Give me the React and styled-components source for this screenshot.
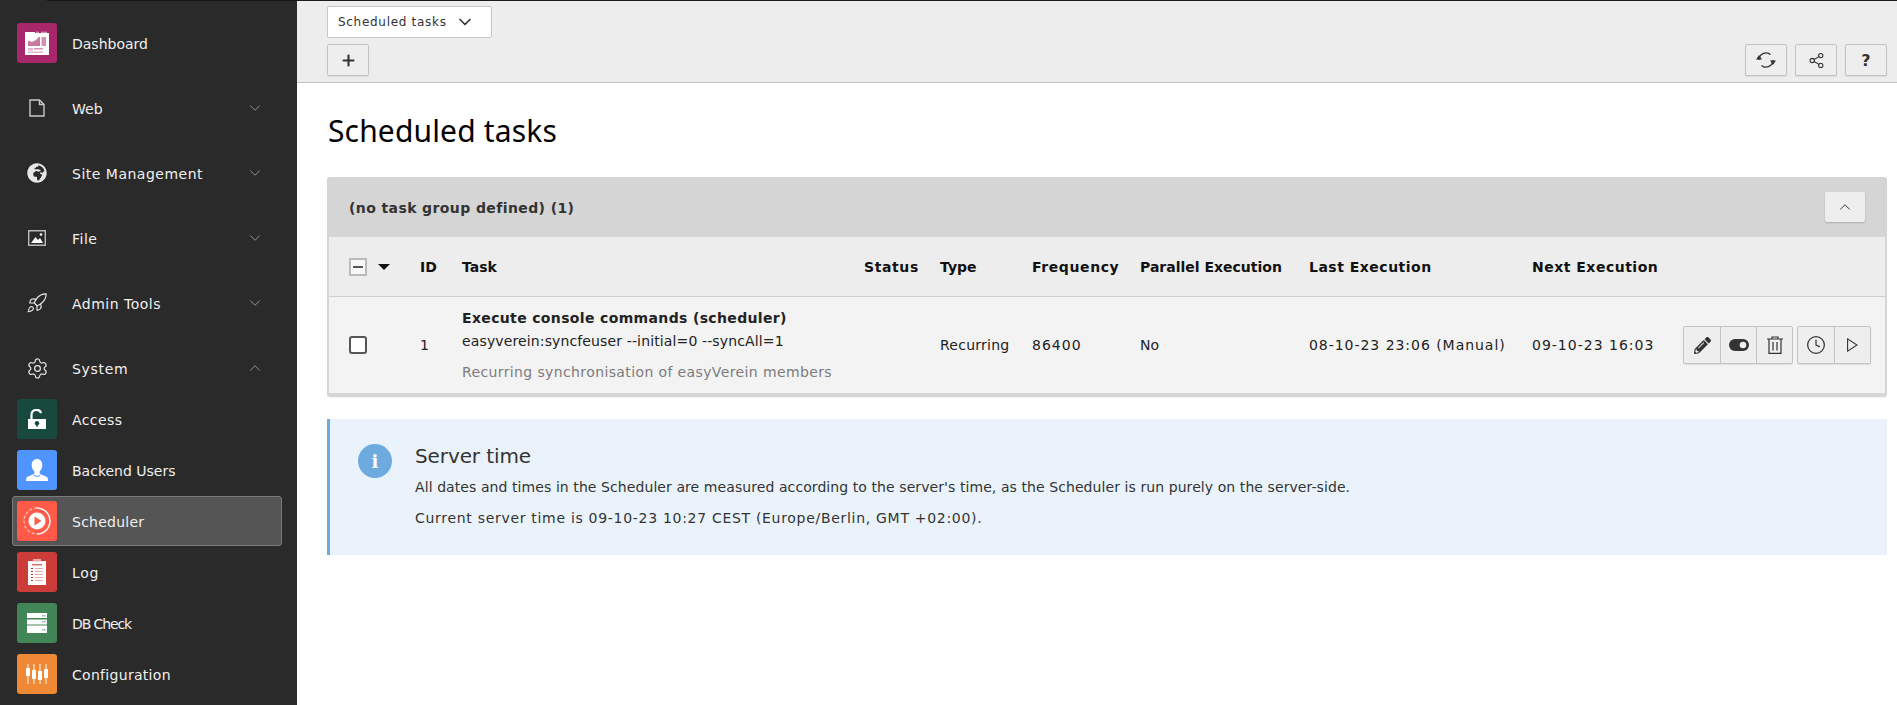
import React from 'react';
import styled, { createGlobalStyle } from 'styled-components';
import { ChevronDown, ChevronUp, Rocket, Settings, Clock, Plus, Share2 } from 'lucide-react';
import { FaGlobeAfrica, FaPencilAlt } from 'react-icons/fa';

const GlobalStyle = createGlobalStyle`
	html, body {
		margin: 0;
		height: 100%;
		overflow: hidden;
		background: #fff;
		font-family: 'DejaVu Sans', Verdana, sans-serif;
		font-size: 14px;
		color: #333;
	}
	* {
		box-sizing: border-box;
	}
`;

const Page = styled.div`
	display: flex;
	height: 705px;
	width: 1897px;
	overflow: hidden;
`;

const Sidebar = styled.nav`
	position: relative;
	flex: 0 0 297px;
	background: #2a2a2a;
	padding-top: 23px;
	color: #f0f0f0;
	&::before {
		content: '';
		position: absolute;
		left: 47px;
		right: 0;
		top: 0;
		height: 1px;
		background: #151515;
	}
`;

const TopItem = styled.div`
	display: flex;
	align-items: center;
	height: 40px;
	margin-bottom: 25px;
	padding-left: 17px;
	&:nth-child(6) {
		margin-bottom: 6px;
	}
`;

const IconSlot = styled.span`
	display: flex;
	align-items: center;
	justify-content: center;
	flex: 0 0 40px;
	height: 40px;
	border-radius: 3px;
	background: ${(p) => p.$bg || 'transparent'};
	color: #e8e8e8;
`;

const Label = styled.span`
	margin-left: 15px;
	padding-top: 2px;
	font-size: 14px;
	letter-spacing: ${(p) => p.$track || 0}px;
	flex: 1;
`;

const Caret = styled.span`
	display: flex;
	margin-right: 33px;
	color: #999;
`;

const SubItem = styled.div`
	display: flex;
	align-items: center;
	height: 50px;
	margin: 0 15px 1px 12px;
	padding-left: 4px;
	border: 1px solid ${(p) => (p.$active ? '#7a7a7a' : 'transparent')};
	border-radius: 3px;
	background: ${(p) => (p.$active ? '#555' : 'transparent')};
`;

const Main = styled.main`
	flex: 1;
	min-width: 0;
`;

const DocHeader = styled.header`
	height: 83px;
	background: #ededed;
	border-top: 1px solid #1c1c1c;
	border-bottom: 1px solid #c3c3c3;
	padding: 5px 10px 0 30px;
`;

const Select = styled.div`
	display: flex;
	align-items: center;
	justify-content: space-between;
	width: 165px;
	height: 32px;
	padding: 0 16px 0 10px;
	background: #fff;
	border: 1px solid #c6c6c6;
	border-radius: 2px;
	font-size: 12px;
	letter-spacing: 0.7px;
	color: #333;
`;

const ButtonBar = styled.div`
	display: flex;
	justify-content: space-between;
	margin-top: 6px;
`;

const ButtonRow = styled.div`
	display: flex;
	gap: 8px;
`;

const IconButton = styled.button`
	display: flex;
	align-items: center;
	justify-content: center;
	width: 42px;
	height: 32px;
	padding: 0;
	background: #eee;
	border: 1px solid #c3c3c3;
	border-radius: 2px;
	box-shadow: 0 1px 1px rgba(0, 0, 0, 0.08);
	color: #333;
	font: bold 16px 'DejaVu Sans', sans-serif;
`;

const Content = styled.div`
	padding: 0 10px 0 30px;
`;

const Title = styled.h1`
	margin: 0;
	padding-top: 28px;
	height: 94px;
	padding-left: 1px;
	font: 400 30px/40px 'Noto Sans', sans-serif;
	letter-spacing: 0.15px;
	color: #000;
`;

const Panel = styled.section`
	border: 2px solid #d6d6d6;
	border-top: 0;
	border-bottom-width: 4px;
	border-radius: 3px;
	box-shadow: 0 1px 1px rgba(0, 0, 0, 0.05);
`;

const PanelHead = styled.div`
	display: flex;
	align-items: center;
	justify-content: space-between;
	height: 60px;
	margin: 0 -2px;
	padding: 0 22px 0 22px;
	background: #d5d5d5;
	border-radius: 3px 3px 0 0;
	font-weight: bold;
	font-size: 14px;
	letter-spacing: 0.4px;
	color: #333;
`;

const PanelTitle = styled.span`
	padding-top: 2px;
`;

const Collapse = styled(IconButton)`
	width: 40px;
	height: 30px;
	border: 0;
	background: #eee;
	box-shadow: 0 1px 2px rgba(0, 0, 0, 0.2);
`;

const columns = '71px 42px 402px 76px 92px 108px 169px 223px 151px 1fr';

const HeadRow = styled.div`
	display: grid;
	grid-template-columns: ${columns};
	align-items: center;
	height: 60px;
	padding-left: 20px;
	background: #ededed;
	border-bottom: 1px solid #d0d0d0;
	font-weight: bold;
	font-size: 14px;
	letter-spacing: 0.25px;
	color: #111;
`;

const BodyRow = styled.div`
	display: grid;
	grid-template-columns: ${columns};
	align-items: center;
	height: 96px;
	padding-left: 20px;
	background: #f3f3f3;
	font-size: 14px;
	color: #222;
`;

const SelectAll = styled.div`
	display: flex;
	align-items: center;
	gap: 11px;
`;

const MinusBox = styled.span`
	display: flex;
	align-items: center;
	justify-content: center;
	width: 18px;
	height: 18px;
	background: #f8f8f8;
	border: 2px solid #bbb;
	&::before {
		content: '';
		width: 10px;
		height: 2px;
		background: #555;
	}
`;

const DownTriangle = styled.span`
	width: 0;
	height: 0;
	border-left: 6px solid transparent;
	border-right: 6px solid transparent;
	border-top: 6px solid #111;
`;

const Check = styled.span`
	display: block;
	width: 18px;
	height: 18px;
	background: #fff;
	border: 2px solid #555;
	border-radius: 3px;
`;

const TaskCell = styled.div`
	display: flex;
	flex-direction: column;
	white-space: nowrap;
`;

const TaskName = styled.strong`
	line-height: 18px;
	letter-spacing: 0.35px;
`;

const TaskCommand = styled.span`
	line-height: 18px;
	margin-top: 5px;
	letter-spacing: 0.13px;
`;

const TaskNote = styled.span`
	line-height: 18px;
	margin-top: 13px;
	letter-spacing: 0.38px;
	color: #7c7c7c;
`;

const Actions = styled.div`
	display: flex;
	gap: 4px;
`;

const ActionGroup = styled.div`
	display: flex;
	height: 38px;
	border: 1px solid #c3c3c3;
	border-radius: 2px;
	background: #eee;
	box-shadow: 0 1px 1px rgba(0, 0, 0, 0.08);
`;

const ActionButton = styled.span`
	display: flex;
	align-items: center;
	justify-content: center;
	width: 36px;
	color: #333;
	& + & {
		border-left: 1px solid #c3c3c3;
	}
`;

const InfoBox = styled.aside`
	display: flex;
	height: 136px;
	margin-top: 22px;
	padding: 25px 0 0 28px;
	background: #eaf3fb;
	border-left: 3px solid #6daae0;
`;

const InfoIcon = styled.span`
	display: flex;
	align-items: center;
	justify-content: center;
	flex: 0 0 34px;
	height: 34px;
	border-radius: 50%;
	background: #6daae0;
	color: #fff;
	font: bold 18px 'DejaVu Serif', serif;
`;

const InfoBody = styled.div`
	margin-left: 23px;
`;

const InfoTitle = styled.h4`
	margin: 0;
	font: 400 20px/24px 'DejaVu Sans', sans-serif;
	letter-spacing: -0.1px;
	color: #333;
`;

const InfoText = styled.p`
	margin: 7px 0 0;
	line-height: 24px;
	font-size: 14px;
	letter-spacing: ${(p) => p.$track || 0}px;
	color: #333;
`;

const Plain = styled.span`
	white-space: nowrap;
	letter-spacing: ${(p) => p.$track || 0}px;
`;

// module icons, drawn because no icon package has them
const DashboardIcon = () => (
	<svg width="24" height="24" viewBox="0 0 24 24">
		<path d="M0 1h10v1h14v22H0z" fill="#fff" />
		<path d="M11 .8h3v1h-3zM16 .8h6v1h-6z" fill="#e3b5ce" />
		<path d="M3 6h12v9H3z" fill="#c9779f" />
		<path d="M3 9.500l4 1.500 4-2 4-4V6H3z" fill="#fff" />
		<path d="M16.500 6H21v9h-4.500z" fill="#d391b3" />
		<path d="M3 17h5v2.500H3zM3 20.500h15V22H3z" fill="#e3b5ce" />
		<path d="M9 17h9v1.500H9z" fill="#d391b3" />
	</svg>
);

const AccessIcon = () => (
	<svg width="18" height="20" viewBox="0 0 18 20">
		<path d="M0 10h18v10H0z" fill="#fff" />
		<path d="M3.500 10V6a5 5 0 0 1 9.700-1.800" fill="none" stroke="#fff" strokeWidth="2.200" />
		<circle cx="9" cy="14.300" r="2.200" fill="#18493f" />
		<path d="M8.300 15h1.400v2.800H8.300z" fill="#18493f" />
	</svg>
);

const UsersIcon = () => (
	<svg width="24" height="24" viewBox="0 0 24 24">
		<path d="M12 1c3.200 0 5.300 2.500 5.300 6 0 2.700-1.100 5-2.600 6.300v2c0 1 4.800 2.200 7.300 3.700.8.500 1 2.500 1 4H1c0-1.500.2-3.500 1-4 2.500-1.500 7.300-2.700 7.300-3.700v-2C7.800 12 6.700 9.700 6.700 7c0-3.500 2.100-6 5.300-6z" fill="#fff" />
		<path d="M8.500 17c1.500 1.700 5.500 1.700 7 0" fill="none" stroke="#4f94ff" strokeWidth="1" />
	</svg>
);

const SchedulerIcon = () => (
	<svg width="28" height="28" viewBox="0 0 28 28" fill="none">
		<circle cx="14" cy="14" r="8.500" fill="#fff" />
		<path d="M11.500 9.500v9l7-4.500z" fill="#ff5a47" />
		<path d="M14 1a13 13 0 0 1 0 26" stroke="#fff" strokeWidth="1.400" />
		<path d="M14 1A13 13 0 0 0 14 27" stroke="#fff" strokeOpacity=".6" strokeWidth="1.400" strokeDasharray="3 2" />
	</svg>
);

const LogIcon = () => (
	<svg width="20" height="26" viewBox="0 0 20 26">
		<path d="M1 2h18v24H1z" fill="#fff" />
		<path d="M6 0h8v2.500H6z" fill="#e8a9a7" />
		<path d="M5 5h10v1.500H5z" fill="#d9706e" />
		<path d="M4 9h2v1H4zM4 12h2v1H4zM4 15h2v1H4zM4 18h2v1H4zM4 21h2v1H4z" fill="#b8322f" />
		<path d="M8 9h8v1H8zM8 12h8v1H8zM8 15h8v1H8zM8 18h8v1H8zM8 21h8v1H8z" fill="#eba9a7" />
	</svg>
);

const DbIcon = () => (
	<svg width="20" height="20" viewBox="0 0 20 20">
		<path d="M0 0h20v5H0zM0 6.500h20v5H0zM0 13h20v7H0z" fill="#fff" />
		<path d="M0 11.500h20V13H0z" fill="#a4c6ae" />
		<path d="M15 2h1.500v1.500H15zM17 2h1.500v1.500H17zM15 8h1.500v1.500H15zM17 8h1.500v1.500H17zM15 16h1.500v1.500H15zM17 16h1.500v1.500H17z" fill="#8fb89b" />
	</svg>
);

const ConfigIcon = () => (
	<svg width="24" height="24" viewBox="0 0 24 24" fill="#fff">
		<path d="M2.300 2h1.400v20H2.300zM8.300 2h1.400v20H8.300zM14.300 2h1.400v20h-1.400zM20.300 2h1.400v20h-1.400z" opacity=".7" />
		<path d="M1 6h4v8H1zM7 8h4v9H7zM13 9h4v9h-4zM19 7h4v9h-4z" />
	</svg>
);

const PageIcon = () => (
	<svg width="16" height="18" viewBox="0 0 16 18" fill="none" stroke="#c8c8c8" strokeWidth="1.400">
		<path d="M1 1h9.500L15 5.500V17H1zM10.500 1v4.500H15" />
	</svg>
);

const ImageIcon = () => (
	<svg width="18" height="16" viewBox="0 0 18 16">
		<path d="M.7.7h16.600v14.600H.7z" fill="none" stroke="#bbb" strokeWidth="1.400" />
		<path d="M3 13l4.500-6 2.500 3 2-2 3 5z" fill="#fff" />
		<circle cx="13" cy="4.500" r="1.300" fill="#fff" />
	</svg>
);

const RefreshIcon = () => (
	<svg width="20" height="18" viewBox="0 0 20 18" fill="none">
		<path d="M3 8.500V9a7 7 0 0 1 11.500-5.400M17 9.500V9A7 7 0 0 1 5.500 14.400" stroke="#333" strokeWidth="1.300" />
		<path d="M0 8.500L3 3.900l3 4.600zM14 9.500l3 4.600 3-4.600z" fill="#333" />
	</svg>
);

const ToggleIcon = () => (
	<svg width="20" height="12" viewBox="0 0 20 12">
		<rect width="20" height="12" rx="6" fill="#333" />
		<circle cx="14" cy="6" r="3.300" fill="#eee" />
	</svg>
);

const TrashIcon = () => (
	<svg width="16" height="18" viewBox="0 0 16 18" fill="none" stroke="#333" strokeWidth="1.200">
		<path d="M0 3h16M5 3V1h6v2M2 3v14.400h12V3M6 6v8.500M10 6v8.500" />
	</svg>
);

const PlayIcon = () => (
	<svg width="11" height="14" viewBox="0 0 11 14" fill="none" stroke="#333" strokeWidth="1.100">
		<path d="M.6.9l9.400 6.100-9.400 6.100z" />
	</svg>
);

const SideLink = ({ icon, label, open, track }) => (
	<TopItem>
		<IconSlot>{icon}</IconSlot>
		<Label $track={track}>{label}</Label>
		{open === true && <Caret><ChevronUp size={18} strokeWidth={1.250} /></Caret>}
		{open === false && <Caret><ChevronDown size={18} strokeWidth={1.250} /></Caret>}
	</TopItem>
);

const SubLink = ({ icon, bg, label, active, track }) => (
	<SubItem $active={active}>
		<IconSlot $bg={bg}>{icon}</IconSlot>
		<Label $track={track}>{label}</Label>
	</SubItem>
);

export default function App() {
	return (
		<Page>
			<GlobalStyle />
			<Sidebar>
				<TopItem>
					<IconSlot $bg="#a8276a"><DashboardIcon /></IconSlot>
					<Label>Dashboard</Label>
				</TopItem>
				<SideLink icon={<PageIcon />} label="Web" open={false} />
				<SideLink icon={<FaGlobeAfrica size={20} />} label="Site Management" open={false} track={0.5} />
				<SideLink icon={<ImageIcon />} label="File" open={false} track={0.5} />
				<SideLink icon={<Rocket size={22} strokeWidth={1.250} />} label="Admin Tools" open={false} track={0.5} />
				<SideLink icon={<Settings size={23} strokeWidth={1.250} />} label="System" open={true} track={0.7} />
				<SubLink icon={<AccessIcon />} bg="#18493f" label="Access" track={0.4} />
				<SubLink icon={<UsersIcon />} bg="#4f94ff" label="Backend Users" />
				<SubLink icon={<SchedulerIcon />} bg="#ff5a47" label="Scheduler" active track={0.25} />
				<SubLink icon={<LogIcon />} bg="#cc3d3a" label="Log" track={0.7} />
				<SubLink icon={<DbIcon />} bg="#428657" label="DB Check" track={-1.100} />
				<SubLink icon={<ConfigIcon />} bg="#f08935" label="Configuration" track={0.3} />
			</Sidebar>
			<Main>
				<DocHeader>
					<Select>
						Scheduled tasks
						<ChevronDown size={20} strokeWidth={2} />
					</Select>
					<ButtonBar>
						<IconButton><Plus size={17} strokeWidth={3} /></IconButton>
						<ButtonRow>
							<IconButton><RefreshIcon /></IconButton>
							<IconButton><Share2 size={17} strokeWidth={1.500} /></IconButton>
							<IconButton>?</IconButton>
						</ButtonRow>
					</ButtonBar>
				</DocHeader>
				<Content>
					<Title>Scheduled tasks</Title>
					<Panel>
						<PanelHead>
							<PanelTitle>(no task group defined) (1)</PanelTitle>
							<Collapse><ChevronUp size={18} strokeWidth={1.250} /></Collapse>
						</PanelHead>
						<HeadRow>
							<SelectAll><MinusBox /><DownTriangle /></SelectAll>
							<Plain>ID</Plain>
							<Plain>Task</Plain>
							<Plain $track={0.6}>Status</Plain>
							<Plain>Type</Plain>
							<Plain $track={0.6}>Frequency</Plain>
							<Plain>Parallel Execution</Plain>
							<Plain $track={0.5}>Last Execution</Plain>
							<Plain $track={0.5}>Next Execution</Plain>
						</HeadRow>
						<BodyRow>
							<Check />
							<Plain>1</Plain>
							<TaskCell>
								<TaskName>Execute console commands (scheduler)</TaskName>
								<TaskCommand>easyverein:syncfeuser --initial=0 --syncAll=1</TaskCommand>
								<TaskNote>Recurring synchronisation of easyVerein members</TaskNote>
							</TaskCell>
							<span />
							<Plain $track={0.25}>Recurring</Plain>
							<Plain $track={1}>86400</Plain>
							<Plain>No</Plain>
							<Plain $track={0.96}>08-10-23 23:06 (Manual)</Plain>
							<Plain $track={1}>09-10-23 16:03</Plain>
							<Actions>
								<ActionGroup>
									<ActionButton><FaPencilAlt size={17} /></ActionButton>
									<ActionButton><ToggleIcon /></ActionButton>
									<ActionButton><TrashIcon /></ActionButton>
								</ActionGroup>
								<ActionGroup>
									<ActionButton><Clock size={20} strokeWidth={1.500} /></ActionButton>
									<ActionButton><PlayIcon /></ActionButton>
								</ActionGroup>
							</Actions>
						</BodyRow>
					</Panel>
					<InfoBox>
						<InfoIcon>i</InfoIcon>
						<InfoBody>
							<InfoTitle>Server time</InfoTitle>
							<InfoText $track={0.08}>All dates and times in the Scheduler are measured according to the server's time, as the Scheduler is run purely on the server-side.</InfoText>
							<InfoText $track={0.7}>Current server time is 09-10-23 10:27 CEST (Europe/Berlin, GMT +02:00).</InfoText>
						</InfoBody>
					</InfoBox>
				</Content>
			</Main>
		</Page>
	);
}
